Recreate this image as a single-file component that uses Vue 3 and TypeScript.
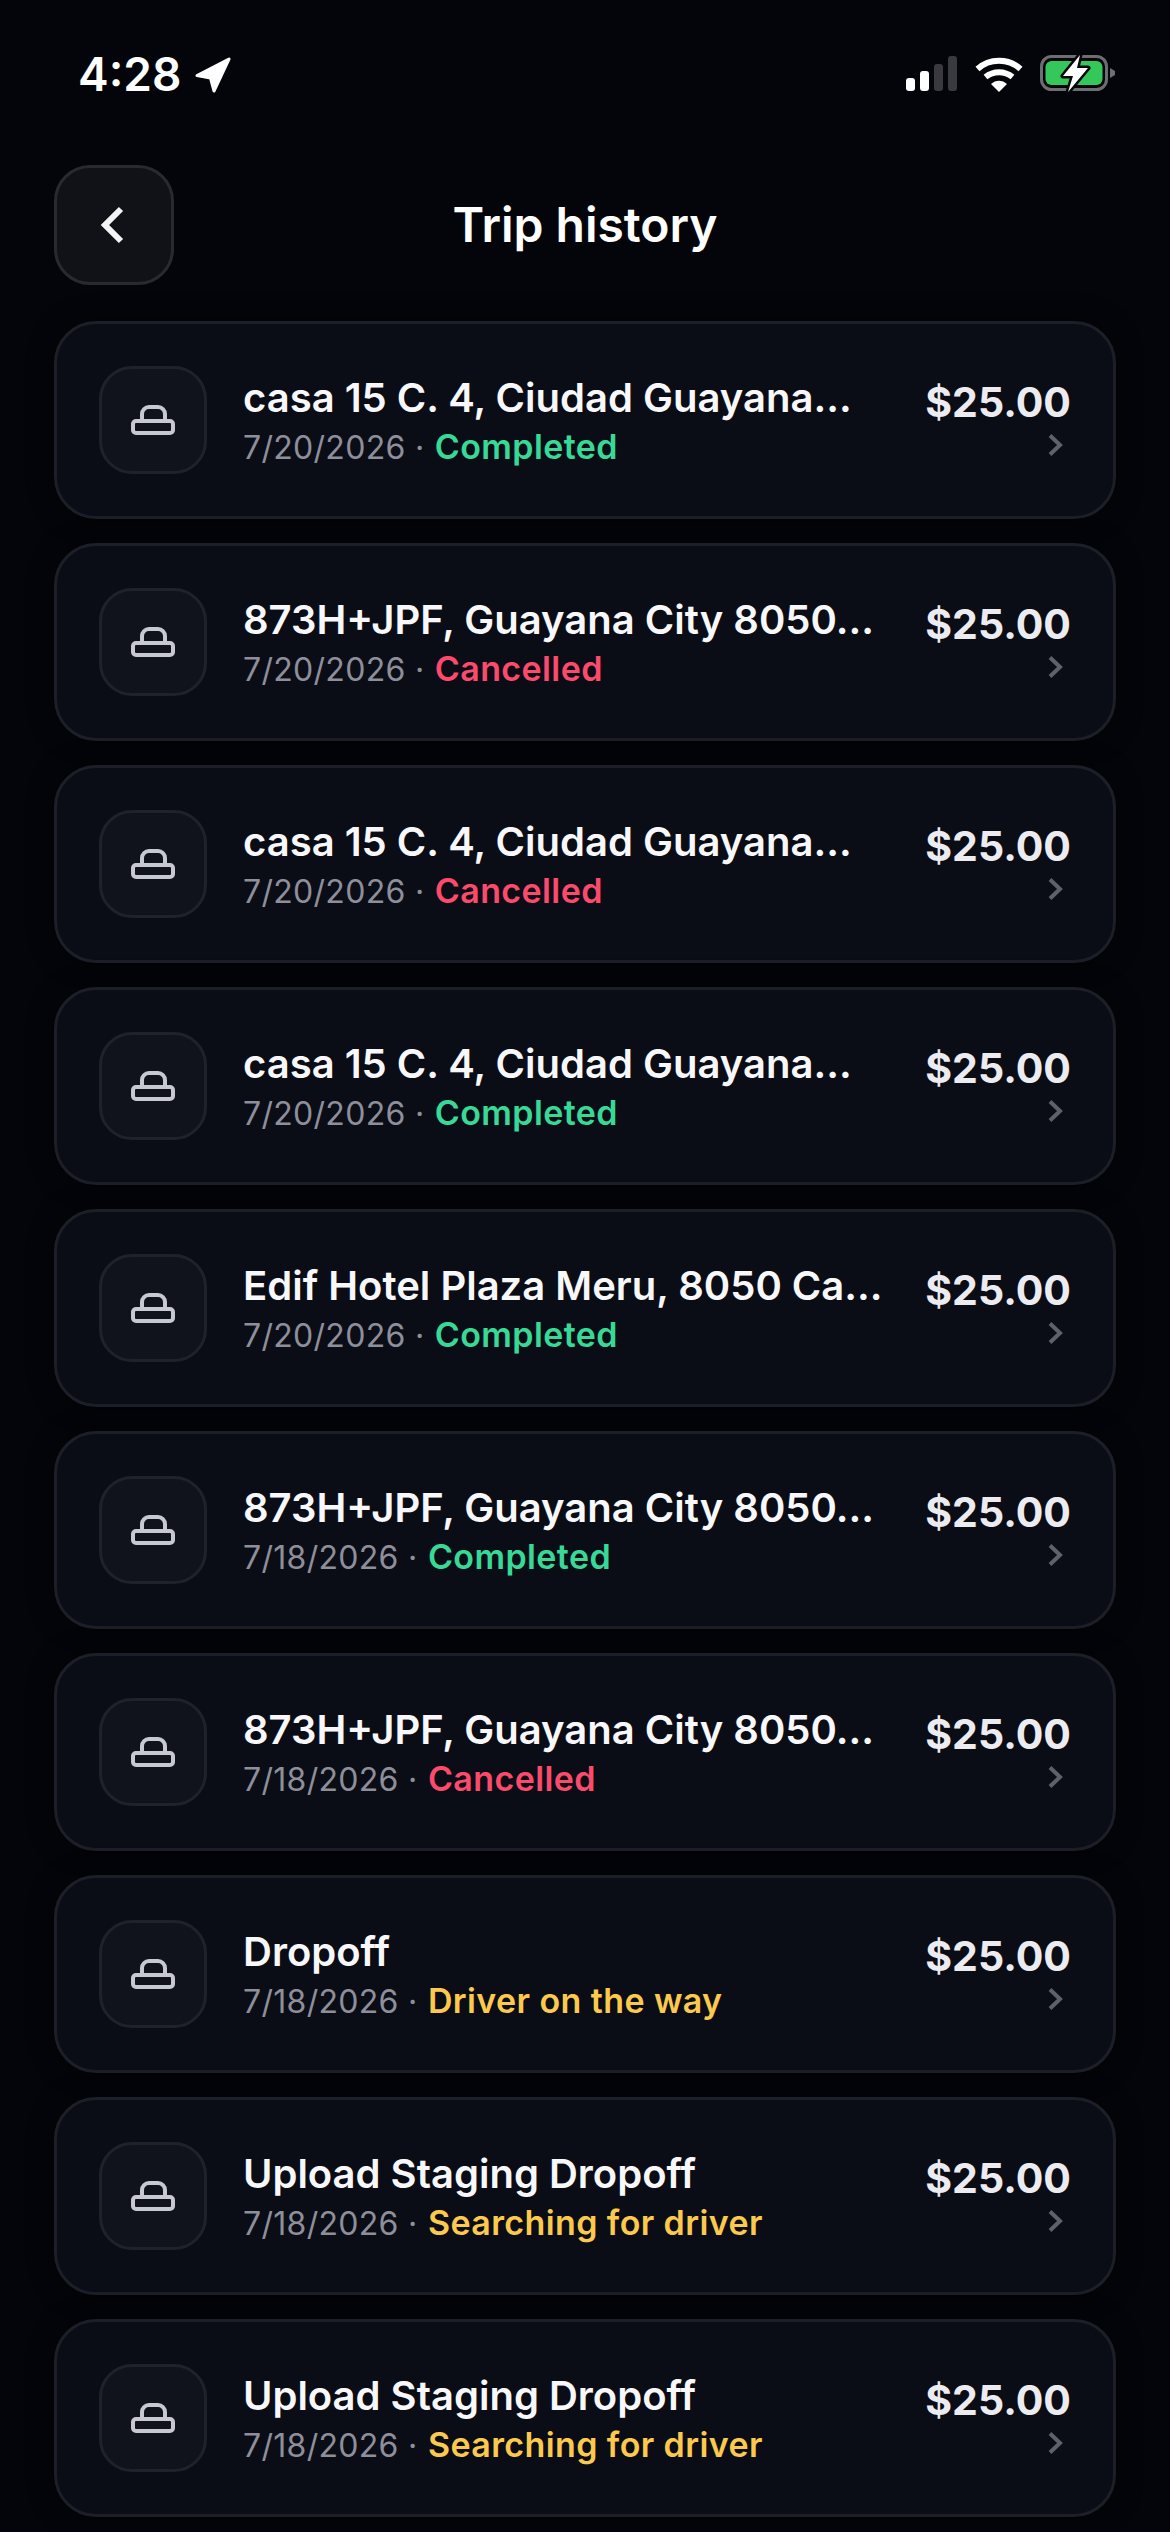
<script setup lang="ts">
type Tone = "done" | "cancel" | "pending";

const trips: { title: string; date: string; status: string; tone: Tone }[] = [
  { title: "casa 15 C. 4, Ciudad Guayana…", date: "7/20/2026", status: "Completed", tone: "done" },
  { title: "873H+JPF, Guayana City 8050…", date: "7/20/2026", status: "Cancelled", tone: "cancel" },
  { title: "casa 15 C. 4, Ciudad Guayana…", date: "7/20/2026", status: "Cancelled", tone: "cancel" },
  { title: "casa 15 C. 4, Ciudad Guayana…", date: "7/20/2026", status: "Completed", tone: "done" },
  { title: "Edif Hotel Plaza Meru, 8050 Ca…", date: "7/20/2026", status: "Completed", tone: "done" },
  { title: "873H+JPF, Guayana City 8050…", date: "7/18/2026", status: "Completed", tone: "done" },
  { title: "873H+JPF, Guayana City 8050…", date: "7/18/2026", status: "Cancelled", tone: "cancel" },
  { title: "Dropoff", date: "7/18/2026", status: "Driver on the way", tone: "pending" },
  { title: "Upload Staging Dropoff", date: "7/18/2026", status: "Searching for driver", tone: "pending" },
  { title: "Upload Staging Dropoff", date: "7/18/2026", status: "Searching for driver", tone: "pending" },
];
</script>

<template>
  <div class="screen">
    <div class="status-bar">
      <div class="clock">
        <span>4:28</span>
        <svg class="arrow" width="36" height="36" viewBox="0 0 36 36">
          <path d="M2 18.500 34 2 19 34 15.500 21Z" fill="#fff" stroke="#fff" stroke-width="3" stroke-linejoin="round" />
        </svg>
      </div>
      <div class="indicators">
        <svg width="52" height="36" viewBox="0 0 52 36">
          <rect x="0" y="22" width="9" height="13" rx="3" fill="#fff" />
          <rect x="14" y="15" width="9" height="20" rx="3" fill="#fff" />
          <rect x="28" y="8" width="9" height="27" rx="3" fill="#3a3a3e" />
          <rect x="42" y="0" width="9" height="35" rx="3" fill="#3a3a3e" />
        </svg>
        <svg width="48" height="36" viewBox="0 0 48 36">
          <path d="M2.500 13C14.500 2 33.500 2 45.500 13" fill="none" stroke="#fff" stroke-width="6" />
          <path d="M10.500 21C18.500 14.500 29.500 14.500 37.500 21" fill="none" stroke="#fff" stroke-width="6" />
          <path d="M16 28C20.500 23.500 27.500 23.500 32 28L24 36Z" fill="#fff" />
        </svg>
        <svg width="76" height="38" viewBox="0 0 76 38">
          <rect x="1.500" y="1.500" width="65" height="33" rx="10" fill="none" stroke="#6e6e72" stroke-width="3" />
          <rect x="5.500" y="6" width="57" height="24" rx="6" fill="#34c759" />
          <path d="M70 13 75 16V20L70 23Z" fill="#6e6e72" />
          <path d="M40 0 23 21H33L28 37 48 13H37Z" fill="#fff" stroke="#06070c" stroke-width="5" stroke-linejoin="round" paint-order="stroke" />
        </svg>
      </div>
    </div>

    <header class="top">
      <button class="back">
        <svg width="30" height="40" viewBox="0 0 30 40">
          <path d="M22 4 6 20 22 36" fill="none" stroke="#f4f4f6" stroke-width="6" />
        </svg>
      </button>
      <h1 class="heading">Trip history</h1>
    </header>

    <div class="list">
      <div v-for="(trip, i) in trips" :key="i" class="card">
        <div class="icon-box">
          <svg width="48" height="36" viewBox="0 0 48 36">
            <path d="M13 17V12a7 7 0 0 1 7-7h9a7 7 0 0 1 7 7v5" fill="none" stroke="#c8c8d2" stroke-width="4" />
            <rect x="4" y="19" width="40" height="12" rx="3" fill="none" stroke="#c8c8d2" stroke-width="4" />
          </svg>
        </div>
        <div class="info">
          <div class="title">{{ trip.title }}</div>
          <div class="meta">
            <span class="date">{{ trip.date }} · </span><span class="state" :class="trip.tone">{{ trip.status }}</span>
          </div>
        </div>
        <div class="side">
          <div class="price">$25.00</div>
          <svg class="chev" width="16" height="22" viewBox="0 0 16 22">
            <path d="M2 1.500 12 11 2 20.500" fill="none" stroke="#5f606c" stroke-width="4" />
          </svg>
        </div>
      </div>
    </div>
  </div>
</template>

<style>
body {
  background: #04050a;
}
</style>

<style scoped>
.screen {
  height: 2532px;
  overflow: hidden;
  background: #04050a;
  font-family: Inter, "Liberation Sans", sans-serif;
  color: #fff;
  box-sizing: border-box;
}
.status-bar {
  height: 165px;
  padding: 50px 54px 0 78px;
  box-sizing: border-box;
  display: flex;
  justify-content: space-between;
  align-items: flex-start;
}
.clock {
  display: flex;
  align-items: center;
  gap: 14px;
  font-size: 46px;
  font-weight: 600;
  line-height: 48px;
}
.arrow {
  margin-top: 2px;
}
.indicators {
  display: flex;
  align-items: center;
  gap: 17px;
  margin-top: 5px;
}
.top {
  position: relative;
  padding: 0 54px;
  height: 120px;
  display: flex;
  align-items: center;
  justify-content: center;
  margin-bottom: 36px;
}
.back {
  position: absolute;
  left: 54px;
  top: 0;
  width: 120px;
  height: 120px;
  box-sizing: border-box;
  background: #111218;
  border: 3px solid #29292f;
  border-radius: 36px;
  padding: 0;
  display: flex;
  align-items: center;
  justify-content: center;
}
.heading {
  margin: 0;
  font-size: 48px;
  font-weight: 600;
  line-height: 60px;
}
.list {
  padding: 0 54px;
  display: flex;
  flex-direction: column;
  gap: 24px;
}
.card {
  height: 198px;
  box-sizing: border-box;
  background: #0b0d16;
  border: 3px solid #1c1e28;
  border-radius: 42px;
  padding: 0 42px;
  display: flex;
  align-items: center;
  gap: 36px;
  box-shadow: 0 0 24px rgba(0, 0, 0, 0.5);
}
.icon-box {
  width: 108px;
  height: 108px;
  flex-shrink: 0;
  box-sizing: border-box;
  background: #11131c;
  border: 3px solid #1f212b;
  border-radius: 33px;
  display: flex;
  align-items: center;
  justify-content: center;
}
.info {
  flex: 1;
  min-width: 0;
  padding-top: 11px;
}
.title {
  font-size: 40px;
  font-weight: 600;
  line-height: 48px;
  color: #f8f8fa;
  white-space: nowrap;
  overflow: hidden;
  text-overflow: ellipsis;
}
.meta {
  line-height: 49px;
  white-space: nowrap;
  letter-spacing: 0.3px;
}
.date {
  font-size: 32px;
  color: #8e8f9b;
}
.state {
  font-size: 34px;
  font-weight: 600;
  margin-left: 1px;
  letter-spacing: 0.4px;
}
.done {
  color: #38d996;
}
.cancel {
  color: #fb4a6c;
}
.pending {
  color: #fcc94f;
}
.side {
  flex-shrink: 0;
  display: flex;
  flex-direction: column;
  align-items: flex-end;
  margin-top: -8px;
}
.price {
  font-size: 41px;
  font-weight: 700;
  line-height: 50px;
  color: #ececf0;
}
.chev {
  margin: 7px 7px 0 0;
}
</style>
